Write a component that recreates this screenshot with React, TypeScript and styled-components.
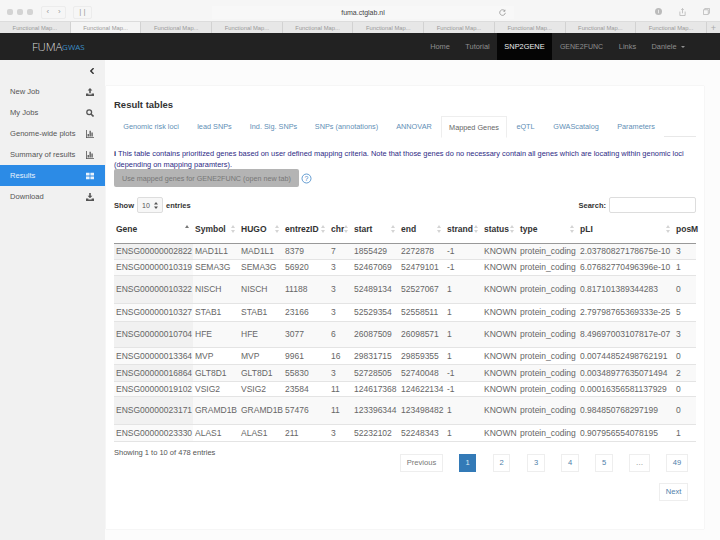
import React from "react";
import styled, { createGlobalStyle } from "styled-components";

const Global = createGlobalStyle`
  html, body { margin: 0; padding: 0; width: 720px; height: 540px; overflow: hidden; background: #fcfcfc; }
  * { box-sizing: border-box; }
  body { font-family: "Liberation Sans", Arial, sans-serif; font-size: 8.5px; color: #555; }
`;

const Page = styled.div`
  width: 720px; height: 540px; display: flex; flex-direction: column; overflow: hidden;
`;
const Toolbar = styled.div`
  height: 21px; background: #f6f6f6; display: flex; align-items: center; padding: 3px 0 0 7px; color: #aaa; position: relative;
`;
const Dots = styled.div`display: flex; gap: 4px; margin-right: 8px;`;
const Dot = styled.span`width: 6px; height: 6px; border-radius: 2px; background: #d4d4d4;`;
const ToolButton = styled.div<{ $w: number }>`
  width: ${p => p.$w}px; height: 13px; border: 1px solid #ececec; border-radius: 2px; margin-right: 7px;
  display: flex; align-items: center; justify-content: space-around; color: #9a9a9a; font-size: 8px; line-height: 1;
`;
const UrlBar = styled.div`
  width: 302px; height: 13px; margin-left: 113px; background: #f8f8f8; display: flex; align-items: center;
  justify-content: center; color: #444; font-size: 7px; position: relative;
`;
const Reload = styled.span`position: absolute; right: 8px; top: 3px; display: flex; color: #888;`;
const ToolIcons = styled.div`position: absolute; right: 10px; top: 8px; display: flex; gap: 17px; color: #bbb;`;
const TabStrip = styled.div`
  height: 12px; background: #e6e6e6; display: flex; border-top: 1px solid #dcdcdc;
`;
const BrowserTab = styled.div<{ $active?: boolean }>`
  width: 70.7px; background: ${p => (p.$active ? "#f4f4f4" : "#e7e7e7")}; border-right: 1px solid #d2d2d2;
  color: #999; font-size: 5.8px; display: flex; align-items: center; justify-content: center; white-space: nowrap;
`;
const NewTab = styled.div`flex: 1; display: flex; align-items: center; justify-content: center; color: #aaa; font-size: 9px;`;

const Navbar = styled.div`
  height: 27px; background: #222; display: flex; align-items: stretch; padding-left: 32px; flex: none;
`;
const Brand = styled.div`
  width: 390px; display: flex; align-items: center; color: #ddd; font-size: 11.5px; font-weight: 300; letter-spacing: -0.2px; font-family: "Open Sans", sans-serif;
`;
const BrandAccent = styled.span`color: #3a8cc4; font-size: 8px; font-weight: 400; letter-spacing: 0;`;
const NavList = styled.div`display: flex; align-items: stretch;`;
const NavItem = styled.div<{ $active?: boolean; $w: number; $fs?: number }>`
  width: ${p => p.$w}px; display: flex; align-items: center; justify-content: center;
  white-space: nowrap; font-size: ${p => p.$fs ?? 7.4}px;
  color: ${p => (p.$active ? "#eee" : "#8f8f8f")}; background: ${p => (p.$active ? "#050505" : "transparent")};
`;
const Caret = styled.span`
  display: inline-block; margin-left: 4px; width: 0; height: 0; border-left: 2px solid transparent; border-right: 2px solid transparent; border-top: 2px solid #8f8f8f;
`;

const Body = styled.div`flex: 1; display: flex; min-height: 0;`;
const Sidebar = styled.div`width: 105px; background: #f1f1f1; flex: none; display: flex; flex-direction: column;`;
const Collapse = styled.div`height: 21px; display: flex; align-items: center; justify-content: flex-end; padding-right: 11px; color: #333;`;
const SideItem = styled.div<{ $active?: boolean }>`
  height: 21px; display: flex; align-items: center; justify-content: space-between; padding: 0 11px 0 10px; font-size: 7.6px; white-space: nowrap;
  color: ${p => (p.$active ? "#e8f2fc" : "#555")}; background: ${p => (p.$active ? "#2c8be6" : "transparent")};
`;

const Main = styled.div`flex: 1; padding: 26px 16px 11px 1px; display: flex;`;
const Panel = styled.div`
  width: 598px; height: 443px; background: #fff; box-shadow: 0 0 1px #ddd; padding: 13px 8px 0; display: flex; flex-direction: column;
`;
const Title = styled.div`font-size: 9.5px; color: #333; height: 17px; line-height: 12px; font-weight: 600;`;
const Tabs = styled.div`display: flex; height: 21px; border-bottom: 1px solid #e8e8e8;`;
const Tab = styled.div<{ $active?: boolean; $w: number }>`
  width: ${p => p.$w}px; height: ${p => (p.$active ? 22 : 21)}px; display: flex; align-items: center; justify-content: center; white-space: nowrap;
  font-size: 7.3px; color: ${p => (p.$active ? "#666" : "#5f8fb6")}; background: #fff;
  border: 1px solid ${p => (p.$active ? "#eee" : "transparent")}; border-bottom-color: ${p => (p.$active ? "#fff" : "transparent")};
`;
const Info = styled.div`color: #2d2a85; font-size: 7.43px; line-height: 11px; margin-top: 11px; height: 21px; white-space: nowrap;`;
const InfoMark = styled.b`font-weight: bold; color: #22205f;`;
const ButtonRow = styled.div`display: flex; align-items: center; gap: 1px; height: 18px;`;
const GrayButton = styled.div`
  width: 185px; height: 18px; background: #b4b4b4; border-radius: 2px; color: #777; font-size: 7.2px; display: flex; align-items: center; justify-content: center; white-space: nowrap;
`;
const Help = styled.span`display: flex; color: #3e84c5; margin-left: 1px;`;
const Controls = styled.div`display: flex; align-items: center; justify-content: space-between; height: 16px; margin-top: 10px; color: #333; font-weight: bold; font-size: 7.5px;`;
const Length = styled.div`display: flex; align-items: center; gap: 3px;`;
const SelectBox = styled.div`
  width: 26px; height: 16px; border: 1px solid #ddd; border-radius: 2px; background: #f7f7f7; font-weight: normal; font-size: 7px; color: #555;
  display: flex; align-items: center; justify-content: space-between; padding: 0 4px 0 4px;
`;
const SearchBox = styled.div`display: flex; align-items: center; gap: 3px;`;
const SearchInput = styled.div`width: 87px; height: 16px; border: 1px solid #ddd; border-radius: 2px; background: #fff;`;

const Table = styled.table`
  width: 582px; table-layout: fixed; border-collapse: collapse; margin-top: 2px; font-size: 8.5px; border-bottom: 1px solid #777;
`;
const HeadRow = styled.tr`height: 28px;`;
const Th = styled.th`
  padding: 0 2px; text-align: left; color: #333; font-weight: bold; font-size: 8.5px; border-bottom: 1px solid #999; white-space: nowrap;
`;
const ThInner = styled.div`display: flex; justify-content: space-between; align-items: center; padding-right: 2px;`;
const Row = styled.tr<{ $h: number; $odd: boolean }>`
  height: ${p => p.$h}px; background: ${p => (p.$odd ? "#f9f9f9" : "#fff")}; border-bottom: 1px solid #e4e4e4;
`;
const Td = styled.td<{ $sorted?: boolean; $odd?: boolean }>`
  padding: 0 2px; white-space: nowrap; color: #666; overflow: visible;
  background: ${p => (p.$sorted ? (p.$odd ? "#f1f1f1" : "#fafafa") : "transparent")};
`;

const Foot = styled.div`margin-top: 7px; height: 8px; line-height: 8px; font-size: 7.5px; color: #555;`;
const Pager = styled.div`display: flex; flex-wrap: wrap; justify-content: flex-end; padding-right: 8px; margin-top: -3px;`;
const PageButton = styled.div<{ $active?: boolean; $w: number; $ml: number; $muted?: boolean }>`
  width: ${p => p.$w}px; margin-left: ${p => p.$ml}px; height: 18px; display: flex; align-items: center; justify-content: center; font-size: 7.6px;
  border: 1px solid ${p => (p.$active ? "#337ab7" : "#eee")};
  background: ${p => (p.$active ? "#337ab7" : "#fff")};
  color: ${p => (p.$active ? "#dbe8f3" : p.$muted ? "#777" : "#4f80aa")};
`;
const Break = styled.div`flex-basis: 100%; height: 11px;`;

const SortIcon = ({ sorted }: { sorted?: boolean }) => (
  <svg width="4" height="8" viewBox="0 0 4 8" style={{ flex: "none" }} aria-hidden="true">
    <path d="M2 0 4 3H0z" fill={sorted ? "#777" : "#d4d4d4"} />
    {!sorted && <path d="M2 8 4 5H0z" fill="#d4d4d4" />}
  </svg>
);

const SelectArrows = () => (
  <svg width="4" height="7" viewBox="0 0 4 7" aria-hidden="true">
    <path d="M2 0 4 2.500H0zM2 7 4 4.500H0z" fill="#555" />
  </svg>
);

const Glyph = ({ d }: { d: string }) => (
  <svg width="8" height="8" viewBox="0 0 10 10" fill="currentColor" aria-hidden="true">
    <path d={d} />
  </svg>
);
const upload = "M5 0 8 3.200H6V6.600H4V3.200H2ZM0 7H3V8H7V7H10V10H0Z";
const download = "M4 0H6V3.400H8L5 6.600 2 3.400H4ZM0 7H3V8H7V7H10V10H0Z";
const chart = "M0 0H1V9H10V10H0ZM2 5H3.600V8H2ZM4.400 1H6V8H4.400ZM6.800 3H8.400V8H6.800Z";
const list = "M0 1H4.500V4.400H0ZM5.500 1H10V4.400H5.500ZM0 5.600H4.500V9H0ZM5.500 5.600H10V9H5.500Z";

const SearchGlyph = () => (
  <svg width="8" height="8" viewBox="0 0 10 10" fill="none" stroke="currentColor" aria-hidden="true">
    <circle cx="4" cy="4" r="3" strokeWidth="1.600" />
    <path d="M6.200 6.200 9.400 9.400" strokeWidth="2" />
  </svg>
);

const rows: [string, string, string, string, string, string, string, string, string, string, number][] = [
  ["ENSG00000002822", "MAD1L1", "MAD1L1", "8379", "7", "1855429", "2272878", "-1", "2.03780827178675e-10", "3", 16],
  ["ENSG00000010319", "SEMA3G", "SEMA3G", "56920", "3", "52467069", "52479101", "-1", "6.07682770496396e-10", "1", 16],
  ["ENSG00000010322", "NISCH", "NISCH", "11188", "3", "52489134", "52527067", "1", "0.817101389344283", "0", 28],
  ["ENSG00000010327", "STAB1", "STAB1", "23166", "3", "52529354", "52558511", "1", "2.79798765369333e-25", "5", 18],
  ["ENSG00000010704", "HFE", "HFE", "3077", "6", "26087509", "26098571", "1", "8.49697003107817e-07", "3", 26],
  ["ENSG00000013364", "MVP", "MVP", "9961", "16", "29831715", "29859355", "1", "0.00744852498762191", "0", 17],
  ["ENSG00000016864", "GLT8D1", "GLT8D1", "55830", "3", "52728505", "52740048", "-1", "0.00348977635071494", "2", 17],
  ["ENSG00000019102", "VSIG2", "VSIG2", "23584", "11", "124617368", "124622134", "-1", "0.00016356581137929", "0", 15],
  ["ENSG00000023171", "GRAMD1B", "GRAMD1B", "57476", "11", "123396344", "123498482", "1", "0.984850768297199", "0", 28],
  ["ENSG00000023330", "ALAS1", "ALAS1", "211", "3", "52232102", "52248343", "1", "0.907956554078195", "1", 17],
];

const widths = [79, 46, 44, 46, 23, 47, 46, 37, 36, 60, 96, 22];
const heads = ["Gene", "Symbol", "HUGO", "entrezID", "chr", "start", "end", "strand", "status", "type", "pLI", "posM"];
const sideItems: [string, React.ReactNode][] = [
  ["New Job", <Glyph d={upload} />],
  ["My Jobs", <SearchGlyph />],
  ["Genome-wide plots", <Glyph d={chart} />],
  ["Summary of results", <Glyph d={chart} />],
  ["Results", <Glyph d={list} />],
  ["Download", <Glyph d={download} />],
];
const tabs: [string, number][] = [
  ["Genomic risk loci", 74], ["lead SNPs", 53], ["Ind. Sig. SNPs", 65], ["SNPs (annotations)", 81],
  ["ANNOVAR", 54], ["Mapped Genes", 66], ["eQTL", 37], ["GWAScatalog", 64], ["Parameters", 56],
];

export default function App() {
  return (
    <Page>
      <Global />
      <Toolbar>
        <Dots><Dot /><Dot /><Dot /></Dots>
        <ToolButton $w={25}><span>‹</span><span>›</span></ToolButton>
        <ToolButton $w={19}><span>| |</span></ToolButton>
        <UrlBar>
          fuma.ctglab.nl
          <Reload>
            <svg width="7" height="7" viewBox="0 0 8 8" fill="none" stroke="currentColor" aria-hidden="true">
              <path d="M6.600 2.200A3.200 3.200 0 1 0 7.200 4.400M6.800.8V2.600H5" strokeWidth="0.8" />
            </svg>
          </Reload>
        </UrlBar>
        <ToolIcons>
          <svg width="7" height="7" viewBox="0 0 8 8" aria-hidden="true"><circle cx="4" cy="4" r="4" fill="#bbb" /><path d="M4 2v4" stroke="#eee" /></svg>
          <svg width="7" height="8" viewBox="0 0 8 9" fill="none" stroke="currentColor" aria-hidden="true"><path d="M1 4v4.500h6V4M4 6V.5M2.500 2 4 .5 5.500 2" /></svg>
          <svg width="7" height="7" viewBox="0 0 8 8" fill="none" stroke="currentColor" aria-hidden="true"><path d="M2 2V.5h5.500V6H6M.5 2H6v5.500H.5z" /></svg>
        </ToolIcons>
      </Toolbar>
      <TabStrip>
        {Array.from({ length: 10 }, (_, i) => (
          <BrowserTab key={i} $active={i === 1}>Functional Map...</BrowserTab>
        ))}
        <NewTab>+</NewTab>
      </TabStrip>
      <Navbar>
        <Brand>FUMA<BrandAccent>GWAS</BrandAccent></Brand>
        <NavList>
          <NavItem $w={36}>Home</NavItem>
          <NavItem $w={39}>Tutorial</NavItem>
          <NavItem $active $w={55}>SNP2GENE</NavItem>
          <NavItem $w={59} $fs={7}>GENE2FUNC</NavItem>
          <NavItem $w={33}>Links</NavItem>
          <NavItem $w={48}>Daniele<Caret /></NavItem>
        </NavList>
      </Navbar>
      <Body>
        <Sidebar>
          <Collapse>
            <svg width="4" height="6" viewBox="0 0 5 7" aria-hidden="true"><path d="M4.500 0 1 3.500 4.500 7" fill="none" stroke="currentColor" strokeWidth="1.800" /></svg>
          </Collapse>
          {sideItems.map(([label, icon], i) => (
            <SideItem key={label} $active={i === 4}>{label}{icon}</SideItem>
          ))}
        </Sidebar>
        <Main>
          <Panel>
            <Title>Result tables</Title>
            <Tabs>
              {tabs.map(([t, w]) => <Tab key={t} $w={w} $active={t === "Mapped Genes"}>{t}</Tab>)}
            </Tabs>
            <Info>
              <InfoMark>i</InfoMark> This table contains prioritized genes based on user defined mapping criteria. Note that those genes do no necessary contain all genes which are locating within genomic loci<br />
              (depending on mapping paramters).
            </Info>
            <ButtonRow>
              <GrayButton>Use mapped genes for GENE2FUNC (open new tab)</GrayButton>
              <Help>
                <svg width="11" height="11" viewBox="0 0 11 11" fill="none" stroke="currentColor" aria-hidden="true">
                  <circle cx="5.500" cy="5.500" r="4.500" strokeWidth="0.8" />
                  <text x="5.500" y="8" textAnchor="middle" fontSize="7" fill="currentColor" stroke="none">?</text>
                </svg>
              </Help>
            </ButtonRow>
            <Controls>
              <Length>
                Show
                <SelectBox>10<SelectArrows /></SelectBox>
                entries
              </Length>
              <SearchBox>Search:<SearchInput /></SearchBox>
            </Controls>
            <Table>
              <colgroup>
                {widths.map((w, i) => <col key={i} style={{ width: w }} />)}
              </colgroup>
              <thead>
                <HeadRow>
                  {heads.map((h, i) => (
                    <Th key={h}>
                      <ThInner>
                        {h === "posM" ? <span>posM</span> : <><span>{h}</span><SortIcon sorted={i === 0} /></>}
                      </ThInner>
                    </Th>
                  ))}
                </HeadRow>
              </thead>
              <tbody>
                {rows.map((r, i) => {
                  const odd = i % 2 === 0;
                  return (
                    <Row key={r[0]} $h={r[10]} $odd={odd}>
                      <Td $sorted $odd={odd}>{r[0]}</Td>
                      <Td>{r[1]}</Td>
                      <Td>{r[2]}</Td>
                      <Td>{r[3]}</Td>
                      <Td>{r[4]}</Td>
                      <Td>{r[5]}</Td>
                      <Td>{r[6]}</Td>
                      <Td>{r[7]}</Td>
                      <Td>KNOWN</Td>
                      <Td>protein_coding</Td>
                      <Td>{r[8]}</Td>
                      <Td>{r[9]}</Td>
                    </Row>
                  );
                })}
              </tbody>
            </Table>
            <Foot>Showing 1 to 10 of 478 entries</Foot>
            <Pager>
              <PageButton $w={43} $ml={0} $muted>Previous</PageButton>
              <PageButton $w={17} $ml={16} $active>1</PageButton>
              <PageButton $w={17} $ml={17}>2</PageButton>
              <PageButton $w={18} $ml={17}>3</PageButton>
              <PageButton $w={18} $ml={16}>4</PageButton>
              <PageButton $w={18} $ml={16}>5</PageButton>
              <PageButton $w={21} $ml={16} $muted>…</PageButton>
              <PageButton $w={22} $ml={16}>49</PageButton>
              <Break />
              <PageButton $w={29} $ml={0}>Next</PageButton>
            </Pager>
          </Panel>
        </Main>
      </Body>
    </Page>
  );
}
